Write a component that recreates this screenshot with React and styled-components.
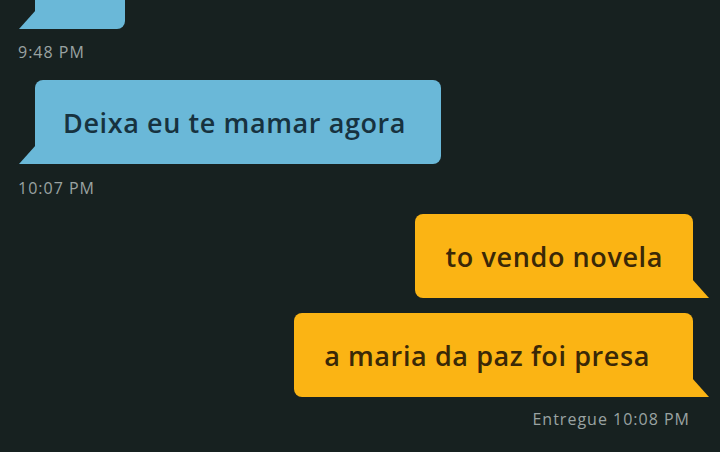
import React from "react";
import styled, { createGlobalStyle } from "styled-components";

const Global = createGlobalStyle`
  html, body { margin: 0; padding: 0; background: #172120; }
  body { width: 720px; height: 452px; overflow: hidden; }
`;

const Chat = styled.div`
  display: flex;
  flex-direction: column;
  padding: 0 10px 0 18px;
  font-family: "Open Sans", "DejaVu Sans", sans-serif;
  box-sizing: border-box;
  width: 720px;
  height: 452px;
  overflow: hidden;
`;

const Bubble = styled.div`
  position: relative;
  box-sizing: border-box;
  height: ${(p) => p.$h || 84}px;
  display: flex;
  align-items: center;
  padding: 0 ${(p) => p.$pr || 32}px 0 ${(p) => p.$pl || 30}px;
  font-size: 27px;
  font-weight: 600;
  letter-spacing: 0.6px;
  white-space: nowrap;
  background: ${(p) => (p.$out ? "#fbb414" : "#6ab8d8")};
  color: ${(p) => (p.$out ? "#3a2807" : "#17323f")};
  align-self: ${(p) => (p.$out ? "flex-end" : "flex-start")};
  margin-left: ${(p) => (p.$out ? 0 : 17)}px;
  margin-right: ${(p) => (p.$out ? 17 : 0)}px;
  margin-top: ${(p) => p.$mt || 0}px;
  border-radius: ${(p) => (p.$out ? "8px 8px 0 8px" : "8px 8px 8px 0")};
  &::after {
    content: "";
    position: absolute;
    bottom: 0;
    width: 17px;
    height: 19px;
    background: inherit;
    ${(p) =>
      p.$out
        ? "right: -16px; clip-path: polygon(0 0, 100% 100%, 0 100%);"
        : "left: -16px; clip-path: polygon(100% 0, 100% 100%, 0 100%);"}
  }
`;

const Meta = styled.div`
  font-family: "Open Sans", "DejaVu Sans", sans-serif;
  font-size: 16px;
  line-height: 16px;
  color: #9aa3a2;
  letter-spacing: 1px;
  align-self: ${(p) => (p.$out ? "flex-end" : "flex-start")};
  margin-top: ${(p) => p.$mt || 0}px;
  margin-right: ${(p) => (p.$out ? 20 : 0)}px;
`;

export default function App() {
  return (
    <>
      <Global />
      <Chat>
        <Bubble $mt={-55} $pl={30} $pr={30}>
          <span style={{ opacity: 0 }}>Oi</span>
        </Bubble>
        <Meta $mt={15}>9:48 PM</Meta>
        <Bubble $mt={20} $pl={28} $pr={35}>Deixa eu te mamar agora</Bubble>
        <Meta $mt={16}>10:07 PM</Meta>
        <Bubble $out $mt={18} $pl={31} $pr={30}>to vendo novela</Bubble>
        <Bubble $out $mt={15} $pl={30} $pr={43}>a maria da paz foi presa</Bubble>
        <Meta $out $mt={14}>Entregue 10:08 PM</Meta>
      </Chat>
    </>
  );
}
